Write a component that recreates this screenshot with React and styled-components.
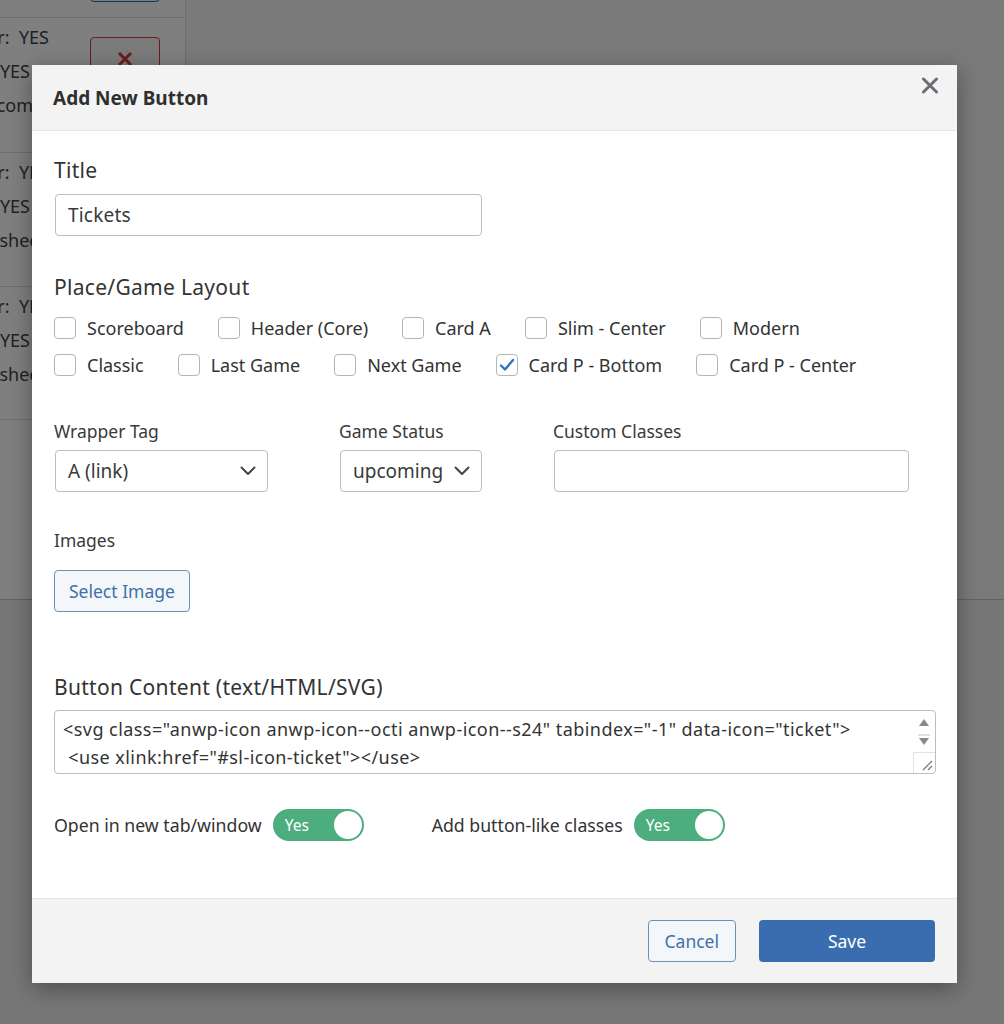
import React from "react";
import styled, { createGlobalStyle } from "styled-components";

const GlobalStyle = createGlobalStyle`
  * { box-sizing: border-box; }
  html, body { margin: 0; padding: 0; }
  body {
    font-family: "Noto Sans", "Open Sans", sans-serif;
    color: #333;
    background: #eeeeee;
  }
`;

/* ---------- admin page behind the dialog ---------- */

const Page = styled.div`
  position: relative;
  width: 1004px;
  height: 1024px;
  overflow: hidden;
  background: #eeeeee;
`;

const TopPanel = styled.div`
  display: flex;
  height: 600px;
  background: #f4f5f5;
  border-bottom: 1px solid #c3c4c7;
`;

const ListColumn = styled.div`
  width: 186px;
  background: #fff;
  border-right: 1px solid #dcdcde;
  overflow: hidden;
`;

const ListRow = styled.div`
  display: flex;
  height: ${(p) => p.h}px;
  border-bottom: 1px solid #dcdcde;
  font-size: 18px;
  color: #3c434a;
`;

const RowText = styled.div`
  display: flex;
  flex-direction: column;
  width: 49px;
  padding-top: 2px;
`;

const RowLine = styled.div`
  display: flex;
  justify-content: flex-end;
  width: ${(p) => p.end}px;
  height: 34px;
  line-height: 34px;
  white-space: pre;
`;

const RowButton = styled.div`
  display: flex;
  align-items: center;
  justify-content: center;
  width: 70px;
  height: 44px;
  margin: ${(p) => p.top}px 0 0 41px;
  border: 1px solid ${(p) => p.tone};
  border-radius: 4px;
  background: #f6f7f7;
  flex-shrink: 0;
`;

const Overlay = styled.div`
  position: absolute;
  inset: 0;
  background: rgba(0, 0, 0, 0.5);
`;

/* ---------- dialog ---------- */

const Modal = styled.div`
  position: absolute;
  left: 32px;
  top: 65px;
  width: 925px;
  background: #fff;
  box-shadow: 0 6px 22px rgba(0, 0, 0, 0.35);
  display: flex;
  flex-direction: column;
`;

const Header = styled.div`
  display: flex;
  align-items: center;
  justify-content: space-between;
  height: 66px;
  padding: 0 18px 0 21px;
  background: #f3f3f3;
  border-bottom: 1px solid #e6e6e6;
`;

const HeaderTitle = styled.h2`
  margin: 0;
  font-size: 19px;
  font-weight: 700;
  color: #2f2f2f;
`;

const CloseButton = styled.button`
  display: flex;
  align-items: center;
  justify-content: center;
  width: 18px;
  height: 18px;
  padding: 0;
  margin-top: -24px;
  border: 0;
  background: none;
  cursor: pointer;
`;

const Body = styled.div`
  padding: 25px 22px 57px 22px;
`;

const Section = styled.div`
  display: flex;
  flex-direction: column;
  align-items: flex-start;
  margin-top: ${(p) => p.mt || 0}px;
`;

const BigLabel = styled.div`
  font-size: 21px;
  line-height: 28px;
  letter-spacing: 0.3px;
  color: #333;
  margin-bottom: ${(p) => p.mb}px;
`;

const SmallLabel = styled.div`
  font-size: 17.5px;
  line-height: 24px;
  color: #3a3a3a;
  margin-bottom: ${(p) => p.mb}px;
`;

const TextInput = styled.input`
  width: ${(p) => p.w}px;
  height: 42px;
  margin-left: 1px;
  padding: 0 12px;
  border: 1px solid #bdbdbd;
  border-radius: 4px;
  font-family: inherit;
  font-size: 19px;
  letter-spacing: 0.2px;
  color: #3a3a3a;
  background: #fff;
  outline: none;
`;

const CheckRows = styled.div`
  display: flex;
  flex-direction: column;
  gap: 7px;
  margin-top: 12px;
`;

const CheckRow = styled.div`
  display: flex;
  align-items: center;
  gap: 34px;
  height: 30px;
`;

const CheckItem = styled.label`
  display: flex;
  align-items: center;
  gap: 11px;
  font-size: 18px;
  color: #333;
  white-space: nowrap;
`;

const CheckBox = styled.span`
  display: flex;
  align-items: center;
  justify-content: center;
  width: 22px;
  height: 22px;
  border: 1px solid #b5b5b5;
  border-radius: 4px;
  background: #fff;
`;

const FieldRow = styled.div`
  display: flex;
  gap: 71px;
  margin-top: ${(p) => p.mt}px;
`;

const Field = styled.div`
  display: flex;
  flex-direction: column;
  align-items: flex-start;
`;

const SelectBox = styled.div`
  display: flex;
  align-items: center;
  justify-content: space-between;
  width: ${(p) => p.w}px;
  height: 42px;
  margin-left: 1px;
  padding: 0 11px 0 12px;
  border: 1px solid #bdbdbd;
  border-radius: 4px;
  font-size: 19px;
  color: #3a3a3a;
  background: #fff;
`;

const OutlineButton = styled.button`
  height: 42px;
  padding: 0 ${(p) => p.px}px;
  border: 1px solid #6b90ba;
  border-radius: 4px;
  background: #f4f7fa;
  color: #3f70a8;
  font-family: inherit;
  font-size: 17.5px;
  cursor: pointer;
`;

const AreaWrap = styled.div`
  position: relative;
  width: 882px;
  height: 64px;
`;

const CodeArea = styled.textarea`
  display: block;
  width: 100%;
  height: 100%;
  padding: 4px 28px 0 8px;
  border: 1px solid #bdbdbd;
  border-radius: 4px;
  font-family: inherit;
  font-size: 18px;
  letter-spacing: 0.45px;
  line-height: 28px;
  color: #333;
  resize: none;
  overflow: hidden;
  white-space: pre;
  outline: none;
`;

const ScrollGlyph = styled.svg`
  position: absolute;
  right: 1px;
  top: 1px;
`;

const ToggleRow = styled.div`
  display: flex;
  align-items: center;
  gap: 68px;
  margin-top: 35px;
`;

const ToggleGroup = styled.div`
  display: flex;
  align-items: center;
  gap: 11px;
  font-size: 17.7px;
  color: #333;
`;

const Switch = styled.span`
  display: flex;
  align-items: center;
  justify-content: space-between;
  width: 91px;
  height: 32px;
  padding: 0 2px 0 12px;
  border-radius: 16px;
  background: #4cad7f;
  color: #fff;
  font-size: 15.5px;
`;

const Knob = styled.span`
  width: 28px;
  height: 28px;
  border-radius: 50%;
  background: #fff;
`;

const Footer = styled.div`
  display: flex;
  align-items: center;
  justify-content: flex-end;
  gap: 23px;
  height: 85px;
  padding: 0 22px;
  background: #f3f3f3;
  border-top: 1px solid #e6e6e6;
`;

const PrimaryButton = styled.button`
  width: 176px;
  height: 42px;
  border: 0;
  border-radius: 4px;
  background: #3a6daf;
  color: #fff;
  font-family: inherit;
  font-size: 17.5px;
  cursor: pointer;
`;

/* ---------- small drawings ---------- */

const Chevron = () => (
  <svg width="16" height="10" viewBox="0 0 16 10">
    <polyline points="1.5,1.5 8,8 14.5,1.5" fill="none" stroke="#444" strokeWidth="2" strokeLinecap="round" strokeLinejoin="round" />
  </svg>
);

const Check = () => (
  <svg width="16" height="14" viewBox="0 0 16 14">
    <polyline points="2,7.5 6,11.5 14,2" fill="none" stroke="#3272be" strokeWidth="2.4" strokeLinecap="round" strokeLinejoin="round" />
  </svg>
);

const layoutRows = [
  [
    ["Scoreboard", false],
    ["Header (Core)", false],
    ["Card A", false],
    ["Slim - Center", false],
    ["Modern", false],
  ],
  [
    ["Classic", false],
    ["Last Game", false],
    ["Next Game", false],
    ["Card P - Bottom", true],
    ["Card P - Center", false],
  ],
];

const codeText =
  '<svg class="anwp-icon anwp-icon--octi anwp-icon--s24" tabindex="-1" data-icon="ticket">\n <use xlink:href="#sl-icon-ticket"></use>\n</svg>';

export default function App() {
  return (
    <>
      <GlobalStyle />
      <Page>
        <TopPanel>
          <ListColumn>
            <ListRow h={18}>
              <RowText />
              <RowButton tone="#2271b1" top={-42} />
            </ListRow>
            <ListRow h={135}>
              <RowText>
                <RowLine end={49}>{"Header:  YES"}</RowLine>
                <RowLine end={30}>{"Sticky:  YES"}</RowLine>
                <RowLine end={33}>example.com</RowLine>
              </RowText>
              <RowButton tone="#d63638" top={19}>
                <svg width="16" height="16" viewBox="0 0 16 16">
                  <path d="M2 2L14 14M14 2L2 14" stroke="#d63638" strokeWidth="3" />
                </svg>
              </RowButton>
            </ListRow>
            <ListRow h={134}>
              <RowText>
                <RowLine end={49}>{"Header:  YES"}</RowLine>
                <RowLine end={30}>{"Sticky:  YES"}</RowLine>
                <RowLine end={46}>stylesheet</RowLine>
              </RowText>
            </ListRow>
            <ListRow h={133}>
              <RowText>
                <RowLine end={49}>{"Header:  YES"}</RowLine>
                <RowLine end={30}>{"Sticky:  YES"}</RowLine>
                <RowLine end={46}>stylesheet</RowLine>
              </RowText>
            </ListRow>
          </ListColumn>
        </TopPanel>
        <Overlay />

        <Modal>
          <Header>
            <HeaderTitle>Add New Button</HeaderTitle>
            <CloseButton aria-label="Close">
              <svg width="18" height="17" viewBox="0 0 18 17">
                <path d="M2.5 2L15.5 15M15.5 2L2.5 15" stroke="#6b6f75" strokeWidth="3" strokeLinecap="round" />
              </svg>
            </CloseButton>
          </Header>

          <Body>
            <Section>
              <BigLabel mb={10}>Title</BigLabel>
              <TextInput w={427} defaultValue="Tickets" />
            </Section>

            <Section mt={37}>
              <BigLabel mb={0}>Place/Game Layout</BigLabel>
              <CheckRows>
                {layoutRows.map((row, i) => (
                  <CheckRow key={i}>
                    {row.map(([name, on]) => (
                      <CheckItem key={name}>
                        <CheckBox>{on && <Check />}</CheckBox>
                        {name}
                      </CheckItem>
                    ))}
                  </CheckRow>
                ))}
              </CheckRows>
            </Section>

            <FieldRow mt={39}>
              <Field>
                <SmallLabel mb={7}>Wrapper Tag</SmallLabel>
                <SelectBox w={213}>
                  A (link)
                  <Chevron />
                </SelectBox>
              </Field>
              <Field>
                <SmallLabel mb={7}>Game Status</SmallLabel>
                <SelectBox w={142}>
                  upcoming
                  <Chevron />
                </SelectBox>
              </Field>
              <Field>
                <SmallLabel mb={7}>Custom Classes</SmallLabel>
                <TextInput w={355} defaultValue="" />
              </Field>
            </FieldRow>

            <Section mt={36}>
              <SmallLabel mb={18}>Images</SmallLabel>
              <OutlineButton px={14}>Select Image</OutlineButton>
            </Section>

            <Section mt={61}>
              <BigLabel mb={9}>Button Content (text/HTML/SVG)</BigLabel>
              <AreaWrap>
                <CodeArea defaultValue={codeText} spellCheck={false} />
                <ScrollGlyph width="22" height="62" viewBox="0 0 22 62">
                  <path d="M6 15L11 8L16 15Z" fill="#8a8a8a" />
                  <line x1="5" y1="24" x2="17" y2="24" stroke="#c4c4c4" strokeWidth="1" />
                  <path d="M6 27L11 34L16 27Z" fill="#8a8a8a" />
                  <line x1="0.5" y1="41" x2="0.5" y2="62" stroke="#e2e2e2" />
                  <line x1="0" y1="41.5" x2="22" y2="41.5" stroke="#e2e2e2" />
                  <path d="M10 59L19 50M15 59L19 55" stroke="#777" strokeWidth="1.2" />
                </ScrollGlyph>
              </AreaWrap>
            </Section>

            <ToggleRow>
              <ToggleGroup>
                Open in new tab/window
                <Switch>
                  Yes
                  <Knob />
                </Switch>
              </ToggleGroup>
              <ToggleGroup>
                Add button-like classes
                <Switch>
                  Yes
                  <Knob />
                </Switch>
              </ToggleGroup>
            </ToggleRow>
          </Body>

          <Footer>
            <OutlineButton px={16}>Cancel</OutlineButton>
            <PrimaryButton>Save</PrimaryButton>
          </Footer>
        </Modal>
      </Page>
    </>
  );
}
